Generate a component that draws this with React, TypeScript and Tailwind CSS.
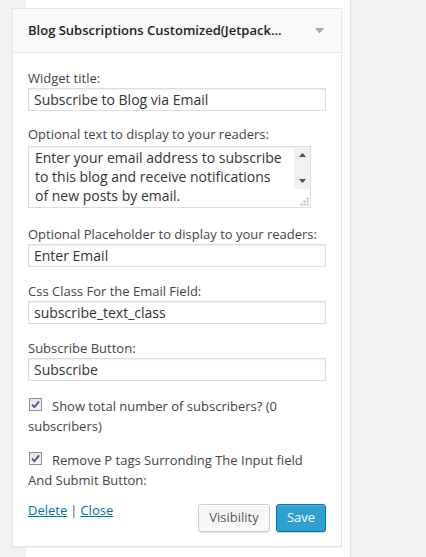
import React from "react";

function Field({ label, value, first }: { label: string; value: string; first?: boolean }) {
  return (
    <div className={first ? "" : "mt-[15px]"}>
      <div className="text-[13px] leading-[19px] text-[#444]">{label}</div>
      <div className="flex h-[23px] w-full items-center border border-[#dddddd] bg-white px-[5px] text-[14px] leading-[19px] text-[#333] shadow-[inset_0_1px_2px_rgba(0,0,0,0.07)]">
        {value}
      </div>
    </div>
  );
}

function Check() {
  return (
    <span className="relative ml-[1px] mr-[10px] inline-block h-[13px] w-[13px] border border-[#8f8f8f] bg-[linear-gradient(#e6e6e6,#f8f8f8)] align-baseline">
      <svg className="absolute left-[1px] top-[1px]" width="9" height="9" viewBox="0 0 9 9">
        <path d="M1 4.6 L3.4 7.2 L8 1.4" fill="none" stroke="#3c4b9b" strokeWidth="1.7" />
      </svg>
    </span>
  );
}

function ResizeGrip() {
  const dots = [
    [6, 0],
    [3, 3],
    [6, 3],
    [0, 6],
    [3, 6],
    [6, 6],
  ];
  return (
    <svg className="absolute bottom-[1px] right-[1px]" width="9" height="9" viewBox="0 0 9 9">
      {dots.map(([x, y], i) => (
        <rect key={i} x={x + 0.5} y={y + 0.5} width="2" height="2" fill="#b9b9b9" />
      ))}
    </svg>
  );
}

export default function App() {
  return (
    <div className="flex h-[557px] w-[426px] overflow-hidden bg-[#f1f1f1] pl-[26px] font-['Open_Sans',sans-serif]">
      <div className="h-full w-[325px] shrink-0 border-r border-[#e5e5e5] bg-white pt-[8px]">
        <div className="ml-[-14px] w-[330px] border border-[#e5e5e5] bg-white shadow-[0_1px_1px_rgba(0,0,0,0.04)]">
          {/* widget title bar */}
          <div className="flex h-[44px] items-center border-b border-[#e5e5e5] bg-[#f9f9f9] px-[15px]">
            <span className="text-[13px] font-semibold text-[#222]">
              Blog Subscriptions Customized(Jetpack...
            </span>
            <svg className="ml-auto mr-[2px]" width="9" height="6" viewBox="0 0 9 6">
              <path d="M0 0 H9 L4.5 5.5 Z" fill="#a6a6a6" />
            </svg>
          </div>

          {/* widget form */}
          <div className="px-[15px] pb-[14px] pt-[16px]">
            <Field first label="Widget title:" value="Subscribe to Blog via Email" />

            <div className="mt-[14px]">
              <div className="text-[13px] leading-[19px] text-[#444]">
                Optional text to display to your readers:
              </div>
              <div className="relative mt-[2px] h-[62px] w-[283px] border border-[#dddddd] bg-white pl-[6px] pt-[1px] text-[14px] leading-[19px] text-[#333] shadow-[inset_0_1px_2px_rgba(0,0,0,0.07)]">
                <div>
                  Enter your email address to subscribe
                  <br />
                  to this blog and receive notifications
                  <br />
                  of new posts by email.
                </div>
                <div className="absolute right-0 top-0 flex h-[42px] w-[16px] flex-col items-center justify-between bg-[#f1f1f1] py-[6px]">
                  <svg width="7" height="4" viewBox="0 0 7 4">
                    <path d="M0 4 H7 L3.5 0 Z" fill="#505050" />
                  </svg>
                  <svg width="7" height="4" viewBox="0 0 7 4">
                    <path d="M0 0 H7 L3.5 4 Z" fill="#505050" />
                  </svg>
                </div>
                <ResizeGrip />
              </div>
            </div>

            <div className="mt-[17px]">
              <div className="text-[13px] leading-[19px] text-[#444]">
                Optional Placeholder to display to your readers:
              </div>
              <div className="flex h-[23px] w-full items-center border border-[#dddddd] bg-white px-[5px] text-[14px] leading-[19px] text-[#333] shadow-[inset_0_1px_2px_rgba(0,0,0,0.07)]">
                Enter Email
              </div>
            </div>

            <Field label="Css Class For the Email Field:" value="subscribe_text_class" />
            <Field label="Subscribe Button:" value="Subscribe" />

            <p className="mt-[15px] text-[13px] leading-[20px] text-[#444]">
              <Check />
              Show total number of subscribers? (0
              <br />
              subscribers)
            </p>

            <p className="mt-[14px] text-[13px] leading-[20px] text-[#444]">
              <Check />
              Remove P tags Surronding The Input field
              <br />
              And Submit Button:
            </p>

            {/* actions */}
            <div className="mt-[11px] flex items-start">
              <div className="text-[13px] leading-[19px] text-[#555]">
                <a className="text-[#0074a2] underline">Delete</a>
                <span className="mx-[3px]">|</span>
                <a className="text-[#0074a2] underline">Close</a>
              </div>
              <div className="ml-auto mt-[3px] flex gap-[6px]">
                <button className="flex h-[28px] w-[72px] items-center justify-center rounded-[3px] border border-[#cccccc] bg-[#f7f7f7] text-[13px] text-[#555] shadow-[inset_0_1px_0_#fff,0_1px_0_rgba(0,0,0,0.08)]">
                  Visibility
                </button>
                <button className="flex h-[28px] w-[50px] items-center justify-center rounded-[3px] border border-[#0074a2] bg-[#2ea2cc] text-[13px] text-white shadow-[inset_0_1px_0_rgba(120,200,230,0.5),0_1px_0_rgba(0,0,0,0.15)]">
                  Save
                </button>
              </div>
            </div>
          </div>
        </div>
      </div>
    </div>
  );
}
